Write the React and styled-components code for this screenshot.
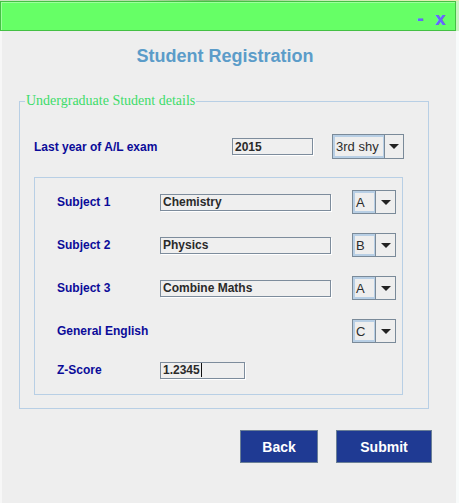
import React from "react";
import styled, { createGlobalStyle } from "styled-components";

const Global = createGlobalStyle`
  html, body { margin: 0; padding: 0; background: #eeeeee; }
  #root { width: 459px; height: 503px; overflow: hidden; }
  * { box-sizing: border-box; }
`;

const Page = styled.div`
  width: 459px;
  height: 503px;
  display: flex;
  flex-direction: column;
  background: #eeeeee;
`;

const DesktopStrip = styled.div`
  height: 1px;
  background: linear-gradient(90deg, #c9e8c0 0%, #b6dca8 30%, #7fbf70 45%, #c8ecb8 70%, #e6f0b0 100%);
`;

const Main = styled.div`
  flex: 1;
  display: flex;
`;

const Window = styled.div`
  width: 456px;
  display: flex;
  flex-direction: column;
`;

const Edge = styled.div`
  width: 3px;
  background: linear-gradient(180deg, #c8f5c0 0px, #c8f5c0 30px, #f8fbfb 30px, #f8fbfb 100%);
`;

const TitleBar = styled.div`
  height: 30px;
  background: #66ff66;
  border: 1px solid #44c044;
  box-shadow: inset 1px 1px 0 #9cff9c;
  display: flex;
  align-items: flex-end;
  justify-content: flex-end;
  padding: 0 9px 2px 0;
  gap: 11px;
  font-family: "DejaVu Sans", sans-serif;
  font-weight: bold;
  font-size: 17px;
  line-height: 18px;
  color: #6666ff;
`;

const TitleButton = styled.span`
  display: block;
`;

const Body = styled.div`
  flex: 1;
  border-left: 2px solid #f7f7f7;
  display: flex;
  flex-direction: column;
`;

const Heading = styled.h1`
  margin: 13px 0 0 0;
  padding-right: 8px;
  height: 24px;
  line-height: 24px;
  text-align: center;
  font-family: "Liberation Sans", Arial, sans-serif;
  font-weight: bold;
  font-size: 18px;
  color: #5b9cc9;
`;

const Group = styled.fieldset`
  margin: 25px 0 0 17px;
  padding: 0;
  width: 410px;
  border: 1px solid #b8cfe5;
  min-width: 0;
`;

const Legend = styled.legend`
  margin-left: 5px;
  padding: 0 1px;
  font-family: "Liberation Serif", "Times New Roman", serif;
  font-size: 14px;
  line-height: 16px;
  color: #3ddc6a;
`;

const GroupContent = styled.div`
  padding: 25px 0 13px 14px;
`;

const TopRow = styled.div`
  display: grid;
  grid-template-columns: 198px 81px 19px 72px;
  align-items: center;
  height: 25px;
`;

const Label = styled.span`
  font-family: "Liberation Sans", Arial, sans-serif;
  font-weight: bold;
  font-size: 12px;
  color: #0b0b99;
  white-space: nowrap;
`;

const Field = styled.div`
  height: 17px;
  width: ${(p) => p.$w || "100%"};
  border: 1px solid #7d8c9c;
  box-shadow: 1px 1px 0 #ffffff;
  background: #efefef;
  display: flex;
  align-items: center;
  padding-left: 2px;
  font-family: "Liberation Sans", Arial, sans-serif;
  font-weight: bold;
  font-size: 12px;
  color: #2a2a2a;
  white-space: nowrap;
`;

const Caret = styled.span`
  display: inline-block;
  width: 1px;
  height: 14px;
  background: #111;
  margin-left: 1px;
`;

const Combo = styled.div`
  grid-column: ${(p) => p.$col};
  height: ${(p) => p.$h}px;
  width: ${(p) => p.$w}px;
  border: 1px solid #7a8a99;
  display: flex;
  background: #eeeeee;
`;

const ComboValue = styled.div`
  flex: 1;
  border: 2px solid #b8cfe5;
  border-right-width: 1px;
  display: flex;
  align-items: center;
  padding-left: 1px;
  font-family: "Liberation Sans", Arial, sans-serif;
  font-size: 13px;
  color: #2c2c2c;
  white-space: nowrap;
  overflow: hidden;
`;

const ComboArrow = styled.div`
  width: ${(p) => p.$w}px;
  border-left: 1px solid #7a8a99;
  display: flex;
  align-items: center;
  justify-content: center;
  &::after {
    content: "";
    width: 0;
    height: 0;
    border-left: 5px solid transparent;
    border-right: 5px solid transparent;
    border-top: 5px solid #222;
  }
`;

const Panel = styled.div`
  margin-top: 18px;
  width: 369px;
  border: 1px solid #b8cfe5;
  padding: 12px 0 12px 22px;
  display: flex;
  flex-direction: column;
`;

const Row = styled.div`
  display: grid;
  grid-template-columns: 103px 171px 21px 44px;
  align-items: center;
  height: 24px;
  margin-top: ${(p) => p.$mt || 0}px;
`;

const Actions = styled.div`
  margin-top: 21px;
  display: flex;
  justify-content: flex-end;
  gap: 18px;
  padding-right: 24px;
`;

const Button = styled.button`
  width: ${(p) => p.$w}px;
  height: 33px;
  background: #1f3a93;
  border: 1px solid #6a7f96;
  color: #ffffff;
  font-family: "Liberation Sans", Arial, sans-serif;
  font-weight: bold;
  font-size: 14px;
  padding: 0;
  cursor: pointer;
`;

function Select({ value, w, h, arrow }) {
  return (
    <Combo $w={w} $h={h} $col={4}>
      <ComboValue>{value}</ComboValue>
      <ComboArrow $w={arrow} />
    </Combo>
  );
}

const subjects = [
  { label: "Subject 1", value: "Chemistry", grade: "A" },
  { label: "Subject 2", value: "Physics", grade: "B" },
  { label: "Subject 3", value: "Combine Maths", grade: "A" },
];

export default function App() {
  return (
    <>
      <Global />
      <Page>
        <DesktopStrip />
        <Main>
          <Window>
            <TitleBar>
              <TitleButton>-</TitleButton>
              <TitleButton>x</TitleButton>
            </TitleBar>
            <Body>
              <Heading>Student Registration</Heading>
              <Group>
                <Legend>Undergraduate Student details</Legend>
                <GroupContent>
                  <TopRow>
                    <Label>Last year of A/L exam</Label>
                    <Field>2015</Field>
                    <Select value="3rd shy" w={72} h={25} arrow={19} />
                  </TopRow>
                  <Panel>
                    {subjects.map((s, i) => (
                      <Row key={s.label} $mt={i === 0 ? 0 : 19}>
                        <Label>{s.label}</Label>
                        <Field>{s.value}</Field>
                        <Select value={s.grade} w={44} h={24} arrow={20} />
                      </Row>
                    ))}
                    <Row $mt={19}>
                      <Label>General English</Label>
                      <Select value="C" w={44} h={24} arrow={20} />
                    </Row>
                    <Row $mt={15}>
                      <Label>Z-Score</Label>
                      <Field $w="85px">
                        1.2345
                        <Caret />
                      </Field>
                    </Row>
                  </Panel>
                </GroupContent>
              </Group>
              <Actions>
                <Button $w={78}>Back</Button>
                <Button $w={96}>Submit</Button>
              </Actions>
            </Body>
          </Window>
          <Edge />
        </Main>
      </Page>
    </>
  );
}
